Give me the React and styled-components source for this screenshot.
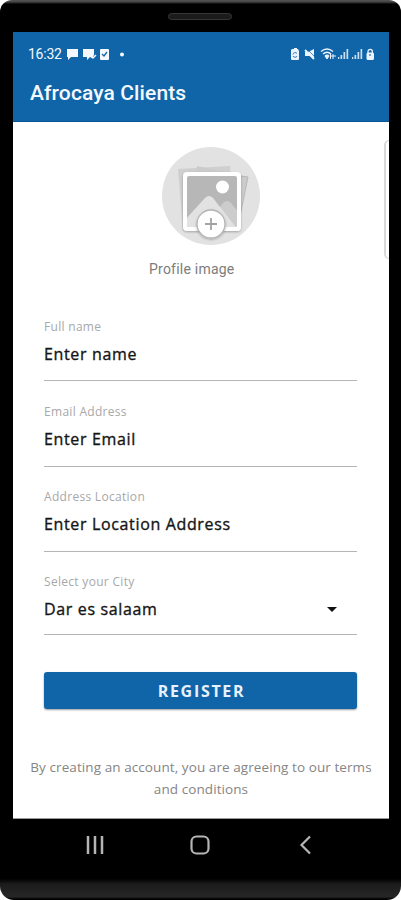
import React from 'react';
import styled, { createGlobalStyle } from 'styled-components';

const GlobalStyle = createGlobalStyle`
  * {
    box-sizing: border-box;
  }
  body {
    margin: 0;
    background: #FFF;
    font-family: "Open Sans", "Noto Sans", sans-serif;
  }
`;

const Phone = styled.div`
  width: 401px;
  height: 900px;
  padding: 0 12px 0 13px;
  display: flex;
  flex-direction: column;
  overflow: hidden;
  border-radius: 12px 12px 14px 14px;
  background: linear-gradient(#555 0, #444 2px, #000 4px, #000 879px, #1C1C1C 884px, #262626 897px, #000 899px);
`;

const Earpiece = styled.div`
  flex: none;
  width: 64px;
  height: 7px;
  margin: 13px auto 12px 155px;
  border: 1px solid #363636;
  border-radius: 4px;
  background: #1B1B1B;
`;

const Screen = styled.main`
  height: 787px;
  display: flex;
  flex-direction: column;
  background: #FFF;
  border-bottom: 1px solid #999;
`;

const Header = styled.header`
  flex: none;
  height: 90px;
  color: #F5F9FF;
  background: #1065A8;
  border-bottom: 1px solid #0B5594;
  font-family: Roboto, sans-serif;
`;

const StatusBar = styled.div`
  height: 44px;
  padding: 0 14px 0 15px;
  display: flex;
  align-items: center;
  justify-content: space-between;
`;

const Time = styled.span`
  width: 37px;
  font-size: 14px;
  letter-spacing: -0.25px;
  line-height: 16px;
`;

const StatusGroup = styled.div`
  display: flex;
  align-items: center;
  svg {
    display: block;
  }
`;

const AppTitle = styled.h1`
  margin: 3px 0 0 17px;
  font-size: 21px;
  font-weight: 500;
  line-height: 28px;
  letter-spacing: 0.12px;
`;

const Content = styled.div`
  position: relative;
  flex: 1;
  display: flex;
  flex-direction: column;
`;

const EdgeHandle = styled.div`
  position: absolute;
  top: 18px;
  right: 0;
  width: 5px;
  height: 119px;
  border: 1px solid #D8D8D8;
  border-left-width: 2px;
  border-right: 0;
  border-radius: 5px 0 0 5px;
`;

const Profile = styled.div`
  height: 197px;
  padding-top: 24px;
  display: flex;
  flex-direction: column;
  svg {
    display: block;
    margin-left: 148px;
  }
`;

const ProfileLabel = styled.span`
  margin: 14px 0 0 136px;
  color: #7C7C7C;
  font-family: Roboto, sans-serif;
  font-size: 14px;
  line-height: 18px;
  letter-spacing: 0.22px;
  white-space: nowrap;
`;

const Form = styled.form`
  padding: 0 32px 0 31px;
`;

const Field = styled.div`
  height: ${(p) => p.$height || 63}px;
  margin-bottom: ${(p) => p.$gap || 22}px;
  border-bottom: 1px solid #B5B5B5;
`;

const Label = styled.div`
  color: #A8A8A8;
  font-size: 12px;
  line-height: 16px;
  letter-spacing: 0.3px;
`;

const Value = styled.div`
  margin-top: 8px;
  display: flex;
  align-items: center;
  justify-content: space-between;
  color: #151515;
  font-size: 16px;
  -webkit-text-stroke: 0.35px #151515;
  line-height: 22px;
  letter-spacing: 0.65px;
`;

const Caret = styled.span`
  margin-right: 20px;
  border: 5px solid transparent;
  border-top-color: #111;
  border-bottom: 0;
`;

const RegisterButton = styled.button`
  display: block;
  width: 100%;
  height: 37px;
  padding: 0 0 0 2px;
  border: 0;
  border-radius: 3px;
  color: #E8F1FF;
  background: #1065A8;
  box-shadow: 0 1px 2px rgba(0, 0, 0, 0.4);
  font-family: "Open Sans", "Noto Sans", sans-serif;
  font-size: 16px;
  font-weight: 700;
  letter-spacing: 1.7px;
`;

const Terms = styled.p`
  margin: 47px 0 0;
  color: #858585;
  font-size: 13.5px;
  line-height: 22px;
  text-align: center;
  letter-spacing: 0.08px;
  white-space: nowrap;
`;

const NavBar = styled.nav`
  height: 52px;
  display: flex;
  align-items: center;
  svg {
    display: block;
  }
`;

const fields = [
  { label: 'Full name', value: 'Enter name', height: 62, gap: 23 },
  { label: 'Email Address', value: 'Enter Email' },
  { label: 'Address Location', value: 'Enter Location Address' },
];

const NotificationIcons = () => (
  <svg width="62" height="14" viewBox="0 0 62 14" fill="#F5F9FF">
    <path d="M2 2h11v8H6l-3 3v-3H2z" />
    <path d="M18 2h11v6l-2 3-2-1-3 3v-3h-4z" />
    <path d="M26 9l2 2 3-3" fill="none" stroke="#F5F9FF" strokeWidth="1.5" />
    <rect x="35" y="2" width="9" height="11" rx="1" />
    <path d="M37 7l2 2 3-4" fill="none" stroke="#1065A8" strokeWidth="1.3" />
    <circle cx="57" cy="7.5" r="2" />
  </svg>
);

const SystemIcons = () => (
  <svg width="86" height="14" viewBox="0 0 86 14" fill="#EAF3FF">
    <path d="M3 2h2V1h3v1h1l1 2v8q0 1-1 1H3q-1 0-1-1V3z" />
    <path d="M4 7.5a2.2 2.2 0 0 1 4-1M8 9a2.2 2.2 0 0 1-4 0" fill="none" stroke="#1065A8" strokeWidth=".8" />
    <path d="M16 5h3l6-3v10l-4-3h-5z" />
    <path d="M18 2l9 9" stroke="#1065A8" strokeWidth=".7" />
    <path d="M16 3l9 9" stroke="#EAF3FF" strokeWidth="1.8" />
    <path d="M32 4.5q6-5 12 0M34 7q4-3.5 8 0M36 9q2-1.5 4 0" fill="none" stroke="#EAF3FF" strokeWidth="1.5" />
    <path d="M38 12l-2-3h4zM41.5 6v6M44 7v5M42 9h5" stroke="#EAF3FF" strokeWidth="1" />
    <path d="M49 10h1.3v2H49zM51.5 8h1.7v4h-1.7zM54.5 5h1.7v7h-1.7zM57.5 2h1.7v10h-1.7zM63 10h1.3v2H63zM65.5 8h1.7v4h-1.7zM68.5 5h1.7v7h-1.7zM71.5 2h1.7v10h-1.7z" opacity=".85" />
    <path d="M79 6V4.5a2.2 2.2 0 0 1 4.4 0V6" fill="none" stroke="#EAF3FF" strokeWidth="1.3" />
    <rect x="77.5" y="5.5" width="7.5" height="7.5" rx="1.5" />
    <path d="M80 7h2v2h-2z" fill="#78A5CC" />
  </svg>
);

const ProfilePlaceholder = () => (
  <svg width="100" height="100" viewBox="0 0 100 100">
    <defs>
      <filter id="softShadow" x="-20%" y="-20%" width="140%" height="140%">
        <feDropShadow dx="0" dy="1" stdDeviation="1" floodOpacity=".28" />
      </filter>
      <clipPath id="photo">
        <rect x="26" y="30" width="50" height="51" rx="2" />
      </clipPath>
    </defs>
    <circle cx="50" cy="50" r="49" fill="#E2E2E2" />
    <path d="M17 23l52-3 5 62-52 3z" fill="#CFCFCF" />
    <path d="M36 20l51 11-11 52-50-3z" fill="#CBCBCB" />
    <path d="M79 30l8 1-10 49" fill="none" stroke="#B8B8B8" />
    <rect x="22" y="26" width="58" height="59" rx="4" fill="#FFF" filter="url(#softShadow)" />
    <g clipPath="url(#photo)">
      <rect x="26" y="30" width="50" height="52" fill="#B7B7B7" />
      <path d="M51 71l11-14q4-4 8 0l8 10v20H51z" fill="#CCC" />
      <path d="M24 74l20-22q4-4 8 0l25 32H24z" fill="#E2E2E2" />
    </g>
    <circle cx="61.5" cy="41" r="6.5" fill="#FFF" />
    <circle cx="50" cy="78" r="14" fill="#FFF" stroke="#B4B4B4" strokeWidth="1.3" filter="url(#softShadow)" />
    <path d="M44 78h12M50 72v12" stroke="#A2A2A2" strokeWidth="1.8" />
  </svg>
);

const NavIcons = () => (
  <svg width="376" height="24" viewBox="0 0 376 24" fill="none" stroke="#B5B5B5" strokeWidth="2.2">
    <path d="M75 3v18M82 3v18M89 3v18" strokeWidth="2.5" />
    <rect x="178.5" y="3.5" width="17" height="17" rx="5" />
    <path d="M297 3.5L288.5 12L297 20.5" />
  </svg>
);

const App = () => {
  return (
    <>
      <GlobalStyle />
      <Phone>
        <Earpiece />
        <Screen>
          <Header>
            <StatusBar>
              <StatusGroup>
                <Time>16:32</Time>
                <NotificationIcons />
              </StatusGroup>
              <StatusGroup>
                <SystemIcons />
              </StatusGroup>
            </StatusBar>
            <AppTitle>Afrocaya Clients</AppTitle>
          </Header>
          <Content>
            <EdgeHandle />
            <Profile>
              <ProfilePlaceholder />
              <ProfileLabel>Profile image</ProfileLabel>
            </Profile>
            <Form>
              {fields.map((field) => (
                <Field key={field.label} $height={field.height} $gap={field.gap}>
                  <Label>{field.label}</Label>
                  <Value>{field.value}</Value>
                </Field>
              ))}
              <Field $height={61} $gap={37}>
                <Label>Select your City</Label>
                <Value>
                  Dar es salaam
                  <Caret />
                </Value>
              </Field>
              <RegisterButton type="button">REGISTER</RegisterButton>
            </Form>
            <Terms>
              By creating an account, you are agreeing to our terms
              <br />
              and conditions
            </Terms>
          </Content>
        </Screen>
        <NavBar>
          <NavIcons />
        </NavBar>
      </Phone>
    </>
  );
};

export default App;
